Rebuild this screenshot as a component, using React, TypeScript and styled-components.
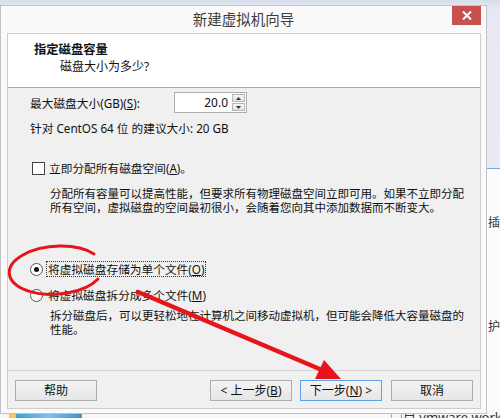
import styled, { createGlobalStyle } from "styled-components";

const GlobalStyle = createGlobalStyle`
  html, body {
    margin: 0;
    padding: 0;
  }
  body {
    width: 500px;
    height: 418px;
    overflow: hidden;
    font-family: "Noto Sans", "Noto Sans CJK SC", sans-serif;
    color: #111;
  }
`;

const Desktop = styled.div`
  position: relative;
  width: 500px;
  height: 418px;
  overflow: hidden;
  background: linear-gradient(180deg, #d7dcea 0px, #e6e9f4 8px, #eceff8 100%);
`;

// window that peeks out behind the dialog on the right
const BackWindow = styled.div`
  position: absolute;
  left: 487px;
  top: 168px;
  width: 120px;
  height: 260px;
  background: #fcfcfd;
  border-top: 1px solid #7ea9dc;
  font-size: 12px;
  line-height: 14px;
  padding: 47px 0 0 1px;
  box-sizing: border-box;
  display: flex;
  flex-direction: column;
  gap: 90px;
  color: #333;
`;

const BottomStrip = styled.div`
  position: absolute;
  left: 0;
  top: 409px;
  width: 500px;
  height: 12px;
  background: #f7f7f8;
  display: flex;
  align-items: flex-start;
`;

const IconTile = styled.div<{ $w: number; $bg: string; $ml?: number }>`
  width: ${(p) => p.$w}px;
  height: 12px;
  margin-left: ${(p) => p.$ml ?? 0}px;
  background: ${(p) => p.$bg};
`;

const DesktopLabel = styled.span`
  margin-left: auto;
  margin-right: -8px;
  font-size: 13px;
  line-height: 14px;
  margin-top: 1px;
  color: #333;
  white-space: nowrap;
`;

const Dialog = styled.div`
  position: absolute;
  left: 0;
  top: 5px;
  width: 487px;
  height: 409px;
  box-sizing: border-box;
  border: 1px solid #c2c2c2;
  background: #fafafa;
  display: flex;
  flex-direction: column;
`;

const TitleBar = styled.div`
  height: 27px;
  display: grid;
  grid-template-columns: 1fr auto 1fr;
`;

const Title = styled.div`
  grid-column: 2;
  font-size: 14.5px;
  line-height: 27px;
  color: #3c3c3c;
  white-space: nowrap;
`;

const CloseButton = styled.div`
  grid-column: 3;
  justify-self: end;
  width: 29px;
  height: 19px;
  margin-right: 5px;
  background: #c75050;
  display: flex;
  align-items: center;
  justify-content: center;
`;

const Content = styled.div`
  flex: 1;
  margin: 0 5px 4px 6px;
  border: 1px solid #cdcdcd;
  display: flex;
  flex-direction: column;
`;

const Header = styled.div`
  height: 54px;
  box-sizing: border-box;
  background: #fff;
  border-bottom: 1px solid #a9a9a9;
  padding: 8px 0 0 26px;
`;

const HeaderTitle = styled.div`
  font-size: 12.3px;
  font-weight: 700;
  line-height: 16px;
`;

const HeaderSub = styled.div`
  font-size: 12px;
  line-height: 16px;
  margin: 1px 0 0 26px;
`;

const Body = styled.div`
  flex: 1;
  background: #f0f0f0;
  padding: 4px 0 0 22px;
  font-size: 11.7px;
  display: flex;
  flex-direction: column;
  align-items: flex-start;
`;

const SizeRow = styled.div`
  display: grid;
  grid-template-columns: 144px 73px;
  align-items: center;
  height: 21px;
`;

const Line = styled.div<{ $mt: number; $ml?: number }>`
  margin-top: ${(p) => p.$mt}px;
  margin-left: ${(p) => p.$ml ?? 0}px;
  line-height: 14px;
  white-space: nowrap;
  display: flex;
  align-items: center;
`;

const Para = styled.div<{ $mt: number }>`
  margin-top: ${(p) => p.$mt}px;
  margin-left: 20px;
  font-size: 11.5px;
  line-height: 13.5px;
  white-space: nowrap;
`;

const SpinBox = styled.div`
  display: flex;
  height: 21px;
  box-sizing: border-box;
  border: 1px solid #abadb3;
  background: #fff;
`;

const SpinValue = styled.div`
  flex: 1;
  text-align: right;
  padding-right: 4px;
  font-size: 12px;
  line-height: 19px;
`;

const SpinButtons = styled.div`
  width: 13px;
  display: flex;
  flex-direction: column;
  gap: 1px;
  padding: 1px 1px 1px 0;
`;

const SpinButton = styled.div`
  flex: 1;
  border: 1px solid #b5b5b5;
  background: linear-gradient(#f6f6f6, #e2e2e2);
  display: flex;
  align-items: center;
  justify-content: center;
`;

const CheckBox = styled.span`
  width: 11px;
  height: 11px;
  border: 1px solid #444;
  background: #fff;
  margin: 0 4px 0 2px;
`;

const Radio = styled.span<{ $checked?: boolean }>`
  width: 11px;
  height: 11px;
  border-radius: 50%;
  border: 1px solid #555;
  background: #fff;
  margin-right: 3px;
  display: flex;
  align-items: center;
  justify-content: center;
  &::after {
    content: "";
    width: 5px;
    height: 5px;
    border-radius: 50%;
    background: ${(p) => (p.$checked ? "#111" : "transparent")};
  }
`;

const FocusLabel = styled.span<{ $focus?: boolean }>`
  padding: 0 1px;
  border: 1px dotted ${(p) => (p.$focus ? "#333" : "transparent")};
  line-height: 14px;
`;

const Footer = styled.div`
  height: 38px;
  box-sizing: border-box;
  border-top: 1px solid #d4d4d4;
  background: #f0f0f0;
  padding: 9px 7px 0 7px;
  display: flex;
  gap: 8px;
`;

const Button = styled.div<{ $primary?: boolean; $push?: boolean }>`
  width: 82px;
  height: 21px;
  box-sizing: border-box;
  border: 1px solid ${(p) => (p.$primary ? "#5ea3e8" : "#acacac")};
  background: linear-gradient(#f4f4f4, #e6e6e6);
  margin-left: ${(p) => (p.$push ? "auto" : "0")};
  font-size: 12px;
  line-height: 19px;
  text-align: center;
  white-space: nowrap;
  &:last-child {
    margin-left: 1px;
  }
`;

const Markup = styled.svg`
  position: absolute;
  left: 0;
  top: 0;
  pointer-events: none;
`;

const Triangle = ({ up }: { up?: boolean }) => (
  <svg width="5" height="3" viewBox="0 0 5 3">
    <path d={up ? "M0 3 L2.5 0 L5 3 Z" : "M0 0 L2.5 3 L5 0 Z"} fill="#333" />
  </svg>
);

export default function App() {
  return (
    <Desktop>
      <GlobalStyle />
      <BackWindow>
        <span>插口</span>
        <span>护</span>
      </BackWindow>
      <BottomStrip>
        <IconTile $w={7} $bg="#f1c94c" $ml={9} />
        <IconTile $w={66} $bg="linear-gradient(90deg,#3d9ed8,#78c4ec,#3a92d0)" />
        <DesktopLabel>□目 vmware works</DesktopLabel>
      </BottomStrip>

      <Dialog>
        <TitleBar>
          <Title>新建虚拟机向导</Title>
          <CloseButton>
            <svg width="10" height="9" viewBox="0 0 10 9">
              <path d="M1 0.5 L9 8.5 M9 0.5 L1 8.5" stroke="#fff" strokeWidth="2" />
            </svg>
          </CloseButton>
        </TitleBar>

        <Content>
          <Header>
            <HeaderTitle>指定磁盘容量</HeaderTitle>
            <HeaderSub>磁盘大小为多少?</HeaderSub>
          </Header>

          <Body>
            <SizeRow>
              <span>
                最大磁盘大小(GB)(<u>S</u>):
              </span>
              <SpinBox>
                <SpinValue>20.0</SpinValue>
                <SpinButtons>
                  <SpinButton>
                    <Triangle up />
                  </SpinButton>
                  <SpinButton>
                    <Triangle />
                  </SpinButton>
                </SpinButtons>
              </SpinBox>
            </SizeRow>

            <Line $mt={8}>针对 CentOS 64 位 的建议大小: 20 GB</Line>

            <Line $mt={26}>
              <CheckBox />
              立即分配所有磁盘空间(<u>A</u>)。
            </Line>

            <Para $mt={12}>
              分配所有容量可以提高性能，但要求所有物理磁盘空间立即可用。如果不立即分配
              <br />
              所有空间，虚拟磁盘的空间最初很小，会随着您向其中添加数据而不断变大。
            </Para>

            <Line $mt={47}>
              <Radio $checked />
              <FocusLabel $focus>
                将虚拟磁盘存储为单个文件(<u>O</u>)
              </FocusLabel>
            </Line>

            <Line $mt={10}>
              <Radio />
              <FocusLabel>
                将虚拟磁盘拆分成多个文件(<u>M</u>)
              </FocusLabel>
            </Line>

            <Para $mt={6}>
              拆分磁盘后，可以更轻松地在计算机之间移动虚拟机，但可能会降低大容量磁盘的
              <br />
              性能。
            </Para>
          </Body>

          <Footer>
            <Button>帮助</Button>
            <Button $push>
              &lt; 上一步(<u>B</u>)
            </Button>
            <Button $primary>
              下一步(<u>N</u>) &gt;
            </Button>
            <Button>取消</Button>
          </Footer>
        </Content>
      </Dialog>

      <Markup width="500" height="418" viewBox="0 0 500 418">
        <path
          d="M94 254 A47 24 -4 1 0 98 279"
          fill="none"
          stroke="#e8141c"
          strokeWidth="3"
          strokeLinecap="round"
        />
        <path
          d="M138 292 L322 370"
          stroke="#e8141c"
          strokeWidth="4.5"
          strokeLinecap="round"
        />
        <path d="M341 379 L324 360 L315 379 Z" fill="#e8141c" />
      </Markup>
    </Desktop>
  );
}
